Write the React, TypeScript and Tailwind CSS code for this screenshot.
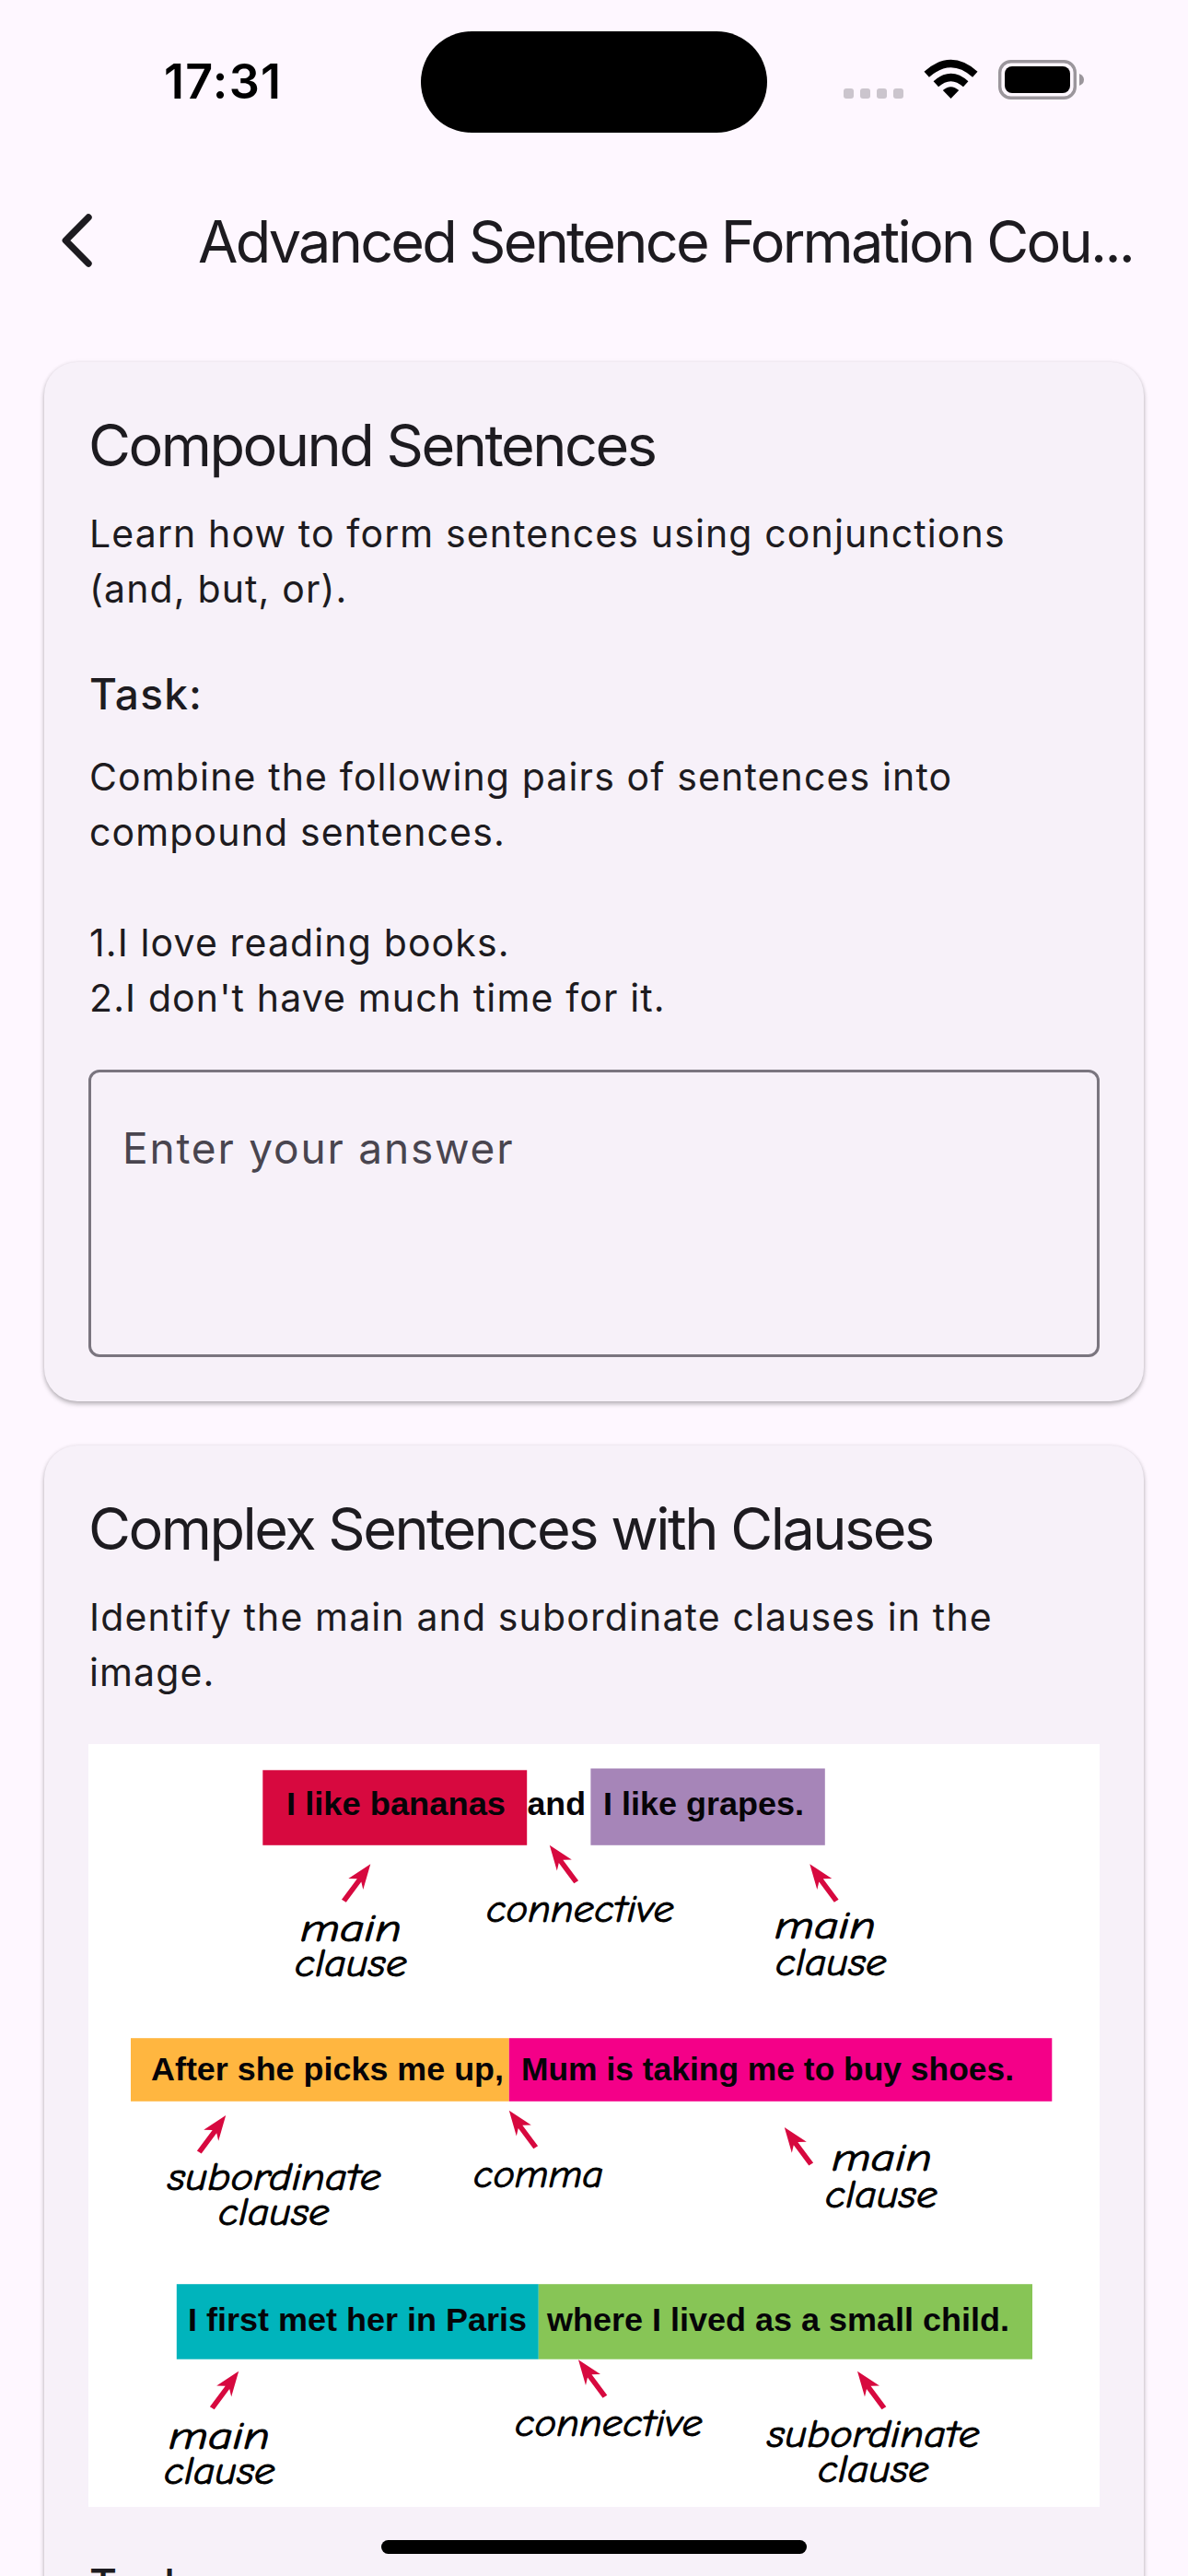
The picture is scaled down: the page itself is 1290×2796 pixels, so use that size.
import type { ReactNode } from "react";

function StatusBar() {
  return (
    <div className="flex h-[177px] items-start">
      <div className="mt-[59px] w-[457px] pl-[178px] text-[52px] leading-[60px] font-semibold tracking-[1.3px] text-black">
        17:31
      </div>
      <div className="mt-[34px] h-[110px] w-[376px] rounded-full bg-black" />
      <div className="mt-[96px] ml-[83px] flex gap-[7px]">
        <span className="size-[11px] rounded-[3px] bg-[#cbc5cd]" />
        <span className="size-[11px] rounded-[3px] bg-[#cbc5cd]" />
        <span className="size-[11px] rounded-[3px] bg-[#cbc5cd]" />
        <span className="size-[11px] rounded-[3px] bg-[#cbc5cd]" />
      </div>
      <svg className="mt-[64px] ml-[22px] h-[44px] w-[59px]" viewBox="1003 64 59 44">
        <path d="M1032.500 107 L1023.800 98 Q1032.500 90.300 1041.200 98 Z" fill="#000" />
        <path d="M1016.300 91.200 Q1032.500 76.700 1048.700 91.200" fill="none" stroke="#000" strokeWidth="8.200" />
        <path d="M1006.200 80.700 Q1032.500 57.300 1058.800 80.700" fill="none" stroke="#000" strokeWidth="8.200" />
      </svg>
      <svg className="mt-[64px] ml-[21px] h-[45px] w-[95px]" viewBox="1083 64 95 45">
        <rect x="1085.700" y="66.700" width="81.600" height="39.600" rx="12" fill="none" stroke="#9b969c" strokeWidth="3.400" />
        <rect x="1091" y="72" width="71" height="29" rx="8" fill="#000" />
        <path d="M1172 80 Q1177 82 1177 86.500 Q1177 91 1172 93 Z" fill="#9b969c" />
      </svg>
    </div>
  );
}

function AppBar() {
  return (
    <header className="flex h-[168px] items-center">
      <svg className="ml-[64px] h-[60px] w-[40px]" viewBox="0 0 40 60" fill="none" stroke="#1d1b20" strokeWidth="7.400" strokeLinecap="round" strokeLinejoin="round">
        <path d="M32 5 L7.300 30 L32 55" />
      </svg>
      <h1 className="ml-[111px] pt-0.5 text-[63px] leading-[84px] tracking-[-2.78px] whitespace-nowrap">
        Advanced Sentence Formation Cou...
      </h1>
    </header>
  );
}

function Card({ title, children }: { title: string; children: ReactNode }) {
  return (
    <section className="rounded-[36px] bg-[#f7f1f9] p-12 shadow-[0_3px_5px_rgba(0,0,0,0.26),0_0_4px_rgba(0,0,0,0.08)]">
      <h2 className="mb-6 text-[63px] leading-[84px] tracking-[-2.5px]">{title}</h2>
      {children}
    </section>
  );
}

function Body({ children }: { children: ReactNode }) {
  return <p className="pl-px text-[41px] leading-[60px] tracking-[1.13px] whitespace-pre-line">{children}</p>;
}

function TaskLabel() {
  return <h3 className="mt-12 mb-6 pl-px text-[46px] leading-[72px] font-medium tracking-[1.2px]">Task:</h3>;
}

type Box = { x: number; y: number; w: number; h: number; fill: string };
const boxes: Box[] = [
  { x: 285.3, y: 1921.3, w: 286.9, h: 81.5, fill: "#d7093f" },
  { x: 641.4, y: 1919.5, w: 254.4, h: 83.3, fill: "#a685b8" },
  { x: 142, y: 2212.2, w: 410.8, h: 68.6, fill: "#ffb640" },
  { x: 552.8, y: 2212.2, w: 589.5, h: 68.6, fill: "#f40088" },
  { x: 191.8, y: 2479.2, w: 393, h: 81.5, fill: "#00b4bc" },
  { x: 584.8, y: 2479.2, w: 536.2, h: 81.5, fill: "#87c556" },
];

type Label = { t: string; x: number; y: number; to: number };
const phrases: Label[] = [
  { t: "I like bananas", x: 311, y: 1970, to: 549 },
  { t: "and", x: 572.5, y: 1970, to: 636 },
  { t: "I like grapes.", x: 655, y: 1970, to: 873 },
  { t: "After she picks me up,", x: 164, y: 2258, to: 547 },
  { t: "Mum is taking me to buy shoes.", x: 566, y: 2258, to: 1101 },
  { t: "I first met her in Paris", x: 204, y: 2529.500, to: 572 },
  { t: "where I lived as a small child.", x: 594, y: 2529.500, to: 1096 },
];

const notes: Label[] = [
  { t: "main", x: 326, y: 2106.500, to: 436 },
  { t: "clause", x: 320, y: 2145, to: 442 },
  { t: "connective", x: 528, y: 2086, to: 732 },
  { t: "main", x: 841, y: 2104, to: 951 },
  { t: "clause", x: 842, y: 2143.500, to: 963 },
  { t: "subordinate", x: 182, y: 2377, to: 414 },
  { t: "clause", x: 237, y: 2415, to: 358 },
  { t: "comma", x: 514, y: 2374, to: 655 },
  { t: "main", x: 903, y: 2356, to: 1012 },
  { t: "clause", x: 896, y: 2395.500, to: 1018 },
  { t: "main", x: 183, y: 2658, to: 293 },
  { t: "clause", x: 178, y: 2696, to: 299 },
  { t: "connective", x: 559, y: 2644, to: 763 },
  { t: "subordinate", x: 833, y: 2656, to: 1064 },
  { t: "clause", x: 888, y: 2694, to: 1009 },
];

const arrows: { x: number; y: number; flip: boolean }[] = [
  { x: 402.3, y: 2023.3, flip: false },
  { x: 596.8, y: 2002.8, flip: true },
  { x: 879.3, y: 2023.3, flip: true },
  { x: 245.2, y: 2296, flip: false },
  { x: 552.8, y: 2290.7, flip: true },
  { x: 851.8, y: 2309, flip: true },
  { x: 259.200, y: 2573.700, flip: false },
  { x: 628, y: 2561.200, flip: true },
  { x: 931, y: 2573.700, flip: true },
];

function ClauseDiagram() {
  return (
    <svg className="mt-12 block h-[828px] w-full bg-white" viewBox="96 1893 1098 828">
      {boxes.map((b) => (
        <rect key={b.fill} x={b.x} y={b.y} width={b.w} height={b.h} fill={b.fill} />
      ))}
      <g className="[font-family:'Liberation_Sans',Arial,sans-serif] text-[35px] font-bold" fill="#060408">
        {phrases.map((p) => (
          <text key={p.t} x={p.x} y={p.y} textLength={p.to - p.x} lengthAdjust="spacingAndGlyphs">
            {p.t}
          </text>
        ))}
      </g>
      <g
        className="[font-family:'Comic_Neue',Lato,cursive] text-[42px] italic [font-variant-ligatures:none]"
        fill="#000"
        stroke="#000"
        strokeWidth="0.900"
      >
        {notes.map((n) => (
          <text key={n.t + n.x} x={n.x} y={n.y} textLength={n.to - n.x} lengthAdjust="spacingAndGlyphs">
            {n.t}
          </text>
        ))}
      </g>
      {arrows.map((a) => (
        <path
          key={`${a.x}-${a.y}`}
          transform={`translate(${a.x} ${a.y}) scale(${a.flip ? -1 : 1} 1)`}
          d="M0 0 L-24 15.700 L-14.500 16 L-31.300 38.500 L-26.500 41.500 L-10 19.300 L-8 27.700 Z"
          fill="#d7093f"
        />
      ))}
    </svg>
  );
}

export default function App() {
  return (
    <div className="relative h-[2796px] w-[1290px] overflow-hidden bg-[#fef7ff] text-[#1d1b20] [font-family:Inter,sans-serif]">
      <StatusBar />
      <AppBar />
      <main className="flex flex-col gap-12 p-12">
        <Card title="Compound Sentences">
          <Body>Learn how to form sentences using conjunctions (and, but, or).</Body>
          <TaskLabel />
          <Body>
            {"Combine the following pairs of sentences into compound sentences.\n\n1.I love reading books.\n2.I don't have much time for it."}
          </Body>
          <div className="mt-12 h-[312px] rounded-[12px] border-3 border-[#7a757f] px-[34px] pt-[46px] text-[46px] leading-[72px] tracking-[1.8px] text-[#49454f]">
            Enter your answer
          </div>
        </Card>
        <Card title="Complex Sentences with Clauses">
          <Body>Identify the main and subordinate clauses in the image.</Body>
          <ClauseDiagram />
          <TaskLabel />
        </Card>
      </main>
      <div className="absolute bottom-6 left-[414px] h-[15px] w-[462px] rounded-full bg-black" />
    </div>
  );
}
